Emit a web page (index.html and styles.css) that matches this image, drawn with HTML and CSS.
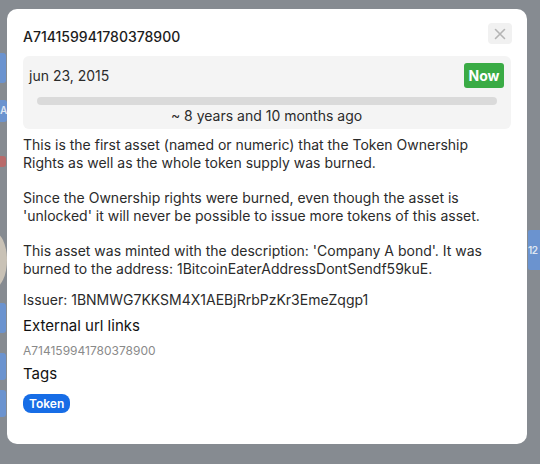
FILE: index.html
```html
<!DOCTYPE html>
<html lang="en">
<head>
    <meta charset="UTF-8">
    <meta name="viewport" content="width=device-width, initial-scale=1.0">
    <title>A714159941780378900</title>
    <link rel="stylesheet" href="styles.css">
</head>
<body>
    <div class="backdrop">
        <!-- page behind the overlay -->
        <span class="ghost ghost-blue g1"></span>
        <span class="ghost ghost-blue g2">A</span>
        <span class="ghost ghost-red g3"></span>
        <span class="ghost ghost-beige g4"></span>
        <span class="ghost ghost-blue g5"></span>
        <span class="ghost ghost-blue g6"></span>
        <span class="ghost ghost-blue g7"></span>
        <span class="ghost ghost-blue g8">12</span>

        <div class="modal">
            <div class="modal-head">
                <h2 class="asset-name">A714159941780378900</h2>
                <button class="close" aria-label="Close">
                    <svg width="12" height="12" viewBox="0 0 12 12">
                        <path d="M1.5 1.5 L10.5 10.5 M10.5 1.5 L1.5 10.5" stroke="#b4b4b4" stroke-width="1.6" stroke-linecap="round" fill="none"/>
                    </svg>
                </button>
            </div>

            <div class="timeline">
                <div class="timeline-row">
                    <span class="date">jun 23, 2015</span>
                    <span class="now">Now</span>
                </div>
                <div class="bar"></div>
                <p class="ago">~ 8 years and 10 months ago</p>
            </div>

            <p class="description">This is the first asset (named or numeric) that the Token Ownership Rights as well as the whole token supply was burned.<br><br>Since the Ownership rights were burned, even though the asset is 'unlocked' it will never be possible to issue more tokens of this asset.<br><br>This asset was minted with the description: 'Company A bond'. It was burned to the address: 1BitcoinEaterAddressDontSendf59kuE.</p>

            <p class="issuer">Issuer: 1BNMWG7KKSM4X1AEBjRrbPzKr3EmeZqgp1</p>

            <h3 class="section-title">External url links</h3>
            <p class="link-id">A714159941780378900</p>

            <h3 class="section-title tags-title">Tags</h3>
            <span class="tag">Token</span>
        </div>
    </div>
</body>
</html>
```

FILE: styles.css
```css
body {
    margin: 0;
    font-family: Inter, "Noto Sans", sans-serif;
    color: #2b2b2b;
}

.backdrop {
    position: relative;
    width: 540px;
    height: 464px;
    overflow: hidden;
    background: #868b91;
    padding-top: 9px;
    box-sizing: border-box;
}

/* faint content of the page under the overlay */
.ghost {
    position: absolute;
    display: block;
    border-radius: 3px;
}

.ghost-blue {
    background: #6b93cf;
    color: #dfe6f2;
    font-size: 10px;
    line-height: 20px;
    font-weight: 600;
}

.ghost-red {
    background: #b86a6a;
}

.ghost-beige {
    background: #c9c2b6;
    border-radius: 50%;
}

.g1 { left: -3px; top: 53px; width: 9px; height: 30px; }
.g2 { left: 0; top: 100px; width: 7px; height: 22px; padding-left: 0; border-radius: 0 3px 3px 0; }
.g3 { left: -2px; top: 156px; width: 8px; height: 11px; }
.g4 { left: -20px; top: 232px; width: 27px; height: 56px; }
.g5 { left: -3px; top: 303px; width: 9px; height: 30px; }
.g6 { left: -3px; top: 353px; width: 9px; height: 27px; }
.g7 { left: -3px; top: 390px; width: 9px; height: 27px; }
.g8 { left: 528px; top: 230px; width: 12px; height: 40px; line-height: 40px; padding-left: 0; letter-spacing: -0.5px; border-radius: 2px 0 0 2px; }

.modal {
    position: relative;
    margin-left: 7px;
    width: 520px;
    height: 435px;
    box-sizing: border-box;
    padding: 14px 16px 0 16px;
    background: #fff;
    border-radius: 10px;
}

.modal-head {
    display: flex;
    justify-content: space-between;
    align-items: flex-start;
}

.asset-name {
    margin: 4px 0 0 0;
    font-size: 14px;
    line-height: 20px;
    font-weight: 500;
    color: #1c1c1c;
}

.close {
    width: 24px;
    height: 21px;
    margin-right: -1px;
    padding: 0;
    border: none;
    border-radius: 4px;
    background: #f1f1f1;
    display: flex;
    align-items: center;
    justify-content: center;
    cursor: pointer;
}

.timeline {
    margin-top: 9px;
    padding: 7px 7px 4px 6px;
    background: #f4f4f4;
    border-radius: 6px;
}

.timeline-row {
    display: flex;
    justify-content: space-between;
    align-items: center;
}

.date {
    font-size: 14px;
    color: #2b2b2b;
}

.now {
    width: 40px;
    height: 25px;
    line-height: 25px;
    text-align: center;
    background: #3aab45;
    color: #fff;
    font-size: 14px;
    font-weight: 700;
    border-radius: 3px;
}

.bar {
    height: 8px;
    margin: 9px 7px 0 8px;
    background: #dadada;
    border-radius: 4px;
}

.ago {
    margin: 2px 0 0 0;
    text-align: center;
    font-size: 14px;
    line-height: 18px;
}

.description {
    margin: 7px 0 0 0;
    font-size: 14px;
    line-height: 17.7px;
}

.issuer {
    margin: 13px 0 0 0;
    font-size: 14px;
    line-height: 18px;
}

.section-title {
    margin: 7px 0 0 0;
    font-size: 15px;
    line-height: 20px;
    font-weight: 400;
    color: #111;
}

.tags-title {
    margin-top: 5px;
}

.link-id {
    margin: 7px 0 0 0;
    font-size: 12px;
    line-height: 16px;
    color: #8a8a8a;
}

.tag {
    display: inline-block;
    margin-top: 10px;
    padding: 0 6px;
    height: 19px;
    line-height: 19px;
    background: #176de6;
    color: #fff;
    font-size: 12px;
    font-weight: 600;
    border-radius: 8px;
}
```
